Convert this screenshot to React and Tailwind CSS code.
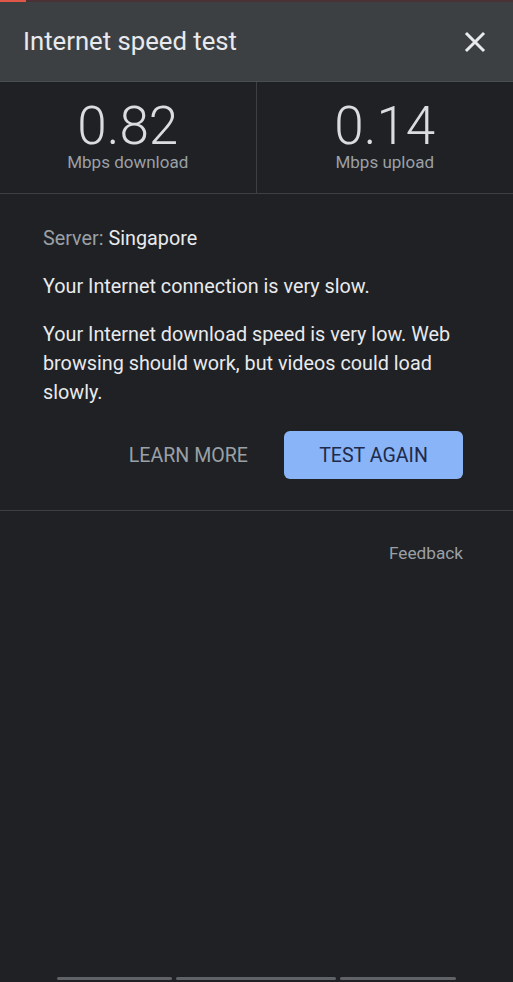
import React from 'react';

const App = () => {
  return (
    <div
      className="w-[513px] h-[982px] bg-[#202124] flex flex-col overflow-hidden"
      style={{ fontFamily: 'Roboto, "Noto Sans", sans-serif' }}
    >
      {/* progress line */}
      <div className="h-[2px] bg-[#4a3234] flex">
        <div className="w-[26px] bg-[#e0574a]" />
      </div>

      {/* header */}
      <div className="h-[80px] bg-[#3c4043] flex items-center justify-between pl-[23px] pr-[27px] border-b border-[#4a4d51]">
        <h1 className="text-[25.7px] text-[#e8eaed] leading-none">Internet speed test</h1>
        <button className="text-[#e8eaed]">
          <svg width="22" height="22" viewBox="0 0 22 22" fill="none" stroke="currentColor" strokeWidth="3" strokeLinecap="square">
            <path d="M3 3 L19 19 M19 3 L3 19" />
          </svg>
        </button>
      </div>

      {/* results */}
      <div className="h-[112px] grid grid-cols-2 border-b border-[#3c4043]">
        <div className="flex flex-col items-center border-r border-[#3c4043] pt-[18px]">
          <div className="text-[53px] font-light text-[#dadce0] leading-[53px]">0.82</div>
          <div className="text-[17px] text-[#9aa0a6] leading-[18px]">Mbps download</div>
        </div>
        <div className="flex flex-col items-center pt-[18px]">
          <div className="text-[53px] font-light text-[#dadce0] leading-[53px]">0.14</div>
          <div className="text-[17px] text-[#9aa0a6] leading-[18px]">Mbps upload</div>
        </div>
      </div>

      {/* details */}
      <div className="px-[43px] pt-[30px] pb-[31px] border-b border-[#3c4043] text-[19.8px] text-[#e8eaed] leading-[29px]">
        <p>
          <span className="text-[#9aa0a6]">Server: </span>Singapore
        </p>
        <p className="mt-[19px]">Your Internet connection is very slow.</p>
        <p className="mt-[19px]">
          Your Internet download speed is very low. Web browsing should work, but videos could load slowly.
        </p>
        <div className="flex justify-end items-center gap-[36px] mt-[24px] pr-[7px]">
          <button className="text-[19.6px] text-[#9aa0a6]">LEARN MORE</button>
          <button className="w-[179px] h-[48px] rounded-[6px] bg-[#8ab4f8] text-[#202a4a] text-[19.6px]">
            TEST AGAIN
          </button>
        </div>
      </div>

      <div className="flex justify-end pr-[50px] pt-[30px]">
        <span className="text-[17.2px] text-[#9aa0a6]">Feedback</span>
      </div>

      <div className="flex-1" />

      {/* bottom bars */}
      <div className="flex gap-[4px] pl-[57px] pb-[2px]">
        <div className="w-[115px] h-[3px] rounded-full bg-[#5f6368]" />
        <div className="w-[160px] h-[3px] rounded-full bg-[#5f6368]" />
        <div className="w-[116px] h-[3px] rounded-full bg-[#5f6368]" />
      </div>
    </div>
  );
};

export default App;
